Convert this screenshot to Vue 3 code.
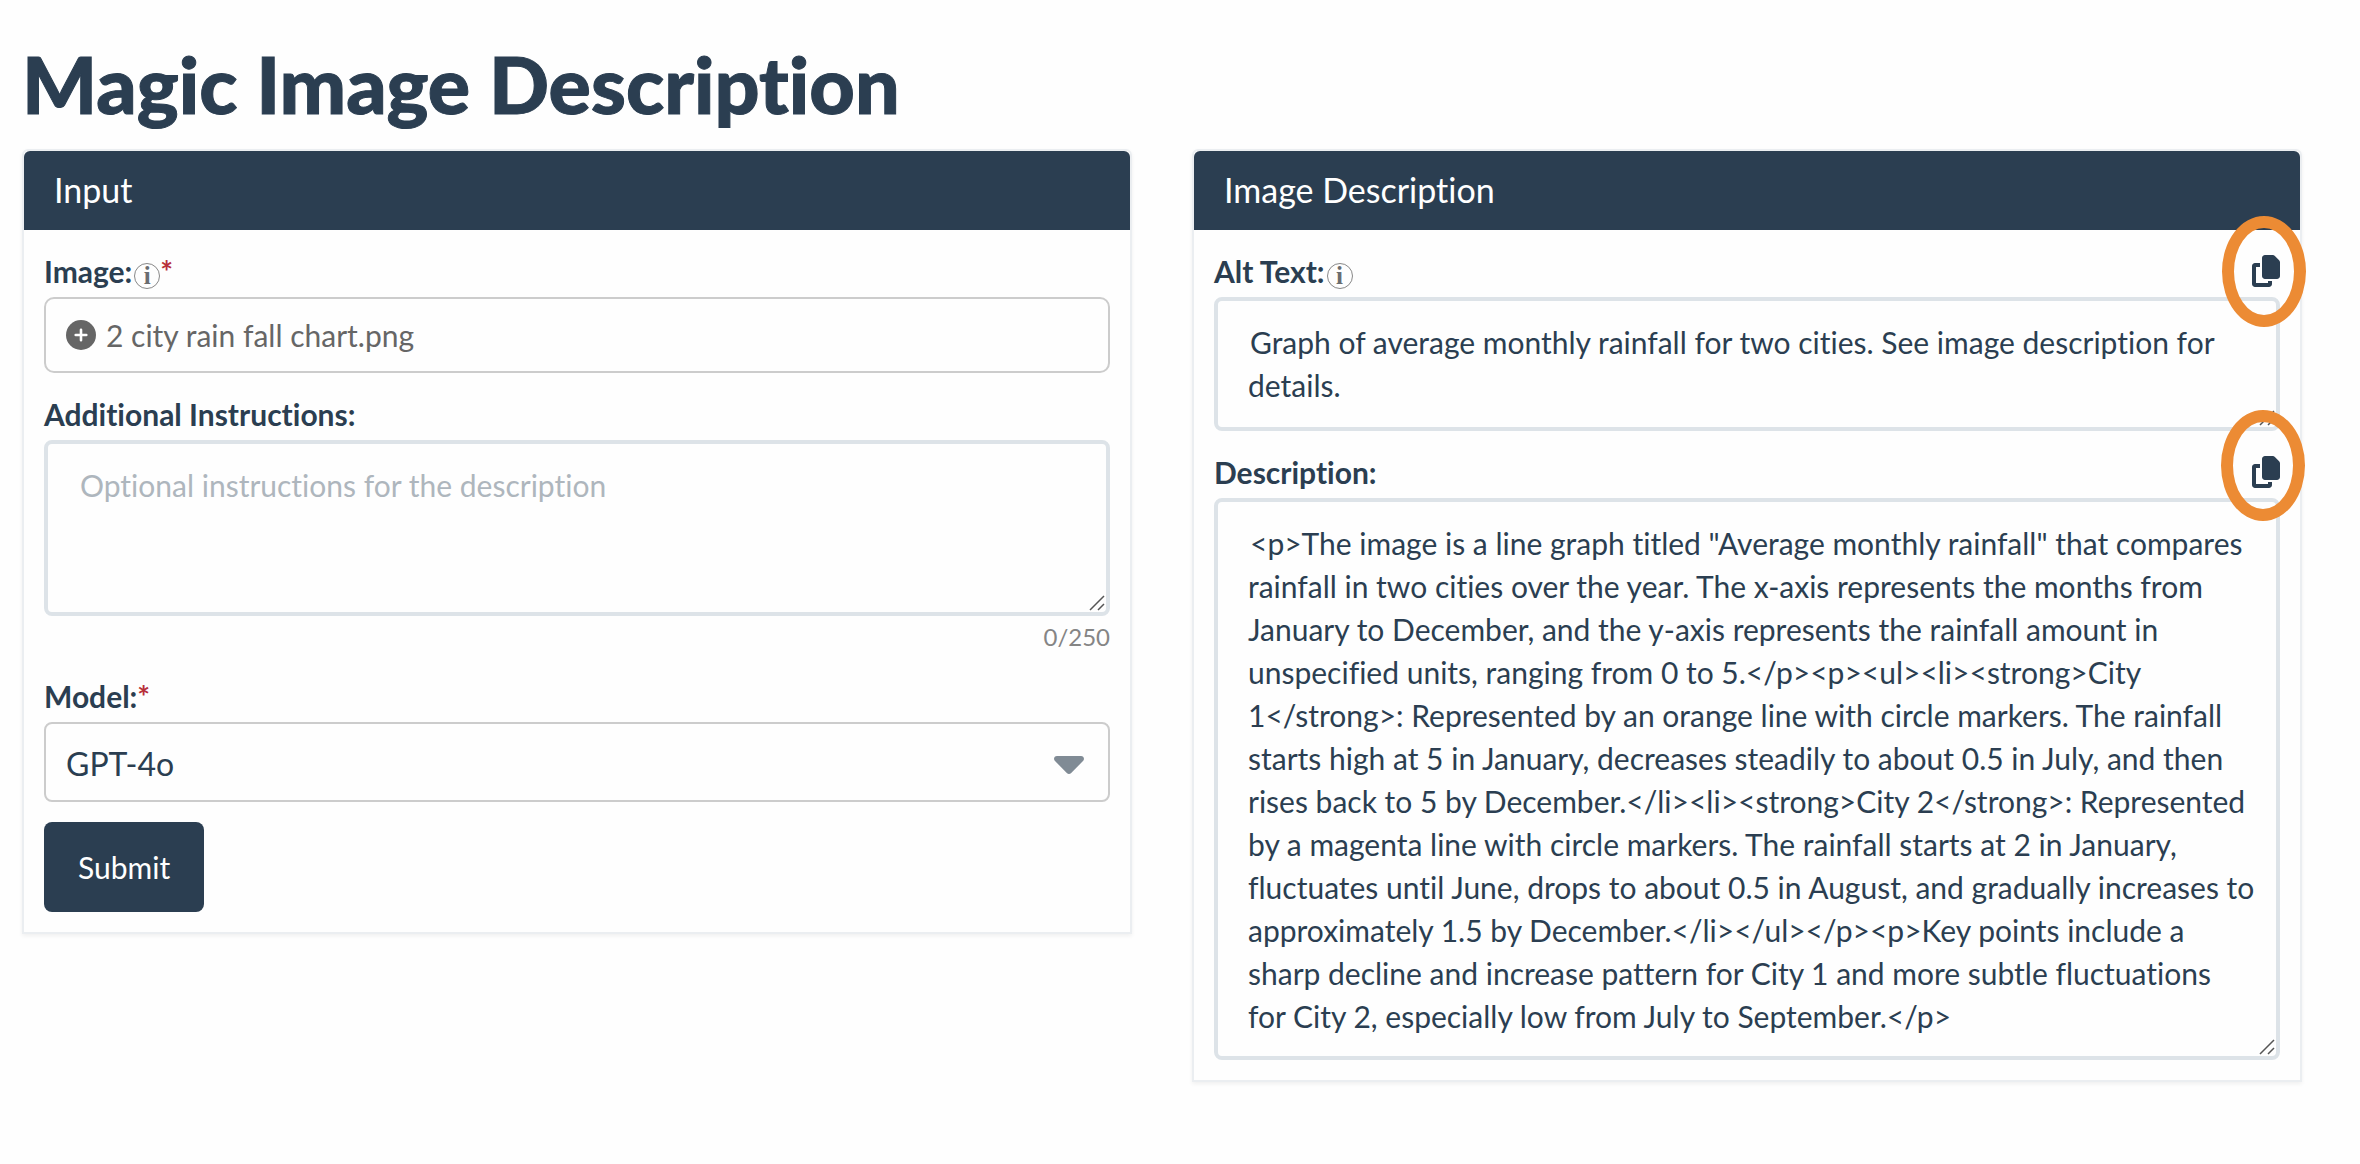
<script setup>
import { ref, computed } from 'vue'

const fileName = ref('2 city rain fall chart.png')
const instructions = ref('')
const model = ref('GPT-4o')
const limit = 250
const used = computed(() => instructions.value.length)

const altText = ref('Graph of average monthly rainfall for two cities. See image description for details.')
const description = ref(
  '<p>The image is a line graph titled "Average monthly rainfall" that compares rainfall in two cities over the year. The x-axis represents the months from January to December, and the y-axis represents the rainfall amount in unspecified units, ranging from 0 to 5.</p><p><ul><li><strong>City 1</strong>: Represented by an orange line with circle markers. The rainfall starts high at 5 in January, decreases steadily to about 0.5 in July, and then rises back to 5 by December.</li><li><strong>City 2</strong>: Represented by a magenta line with circle markers. The rainfall starts at 2 in January, fluctuates until June, drops to about 0.5 in August, and gradually increases to approximately 1.5 by December.</li></ul></p><p>Key points include a sharp decline and increase pattern for City 1 and more subtle fluctuations for\u00a0City 2, especially low from July to September.</p>'
)

function pickFile(event) {
  const file = event.target.files[0]
  if (file) fileName.value = file.name
}

function copy(text) {
  navigator.clipboard?.writeText(text)
}
</script>

<template>
  <main class="page">
    <h1 class="title">Magic Image Description</h1>
    <div class="columns">
      <form class="panel" @submit.prevent>
        <h2 class="panel-head">Input</h2>
        <div class="panel-body">
          <div class="label-row">
            <label for="image">Image:</label>
            <span class="info" title="More information">i</span>
            <span class="required">*</span>
          </div>
          <label class="file" for="image">
            <svg class="plus" viewBox="0 0 30 30" aria-hidden="true">
              <circle cx="15" cy="15" r="15" fill="#666" />
              <path d="M15 9.7v10.6M9.7 15h10.6" stroke="#fff" stroke-width="2.6" stroke-linecap="round" />
            </svg>
            <span>{{ fileName }}</span>
          </label>
          <input id="image" class="file-input" type="file" accept="image/*" @change="pickFile" />

          <div class="label-row">
            <label for="instructions">Additional Instructions:</label>
          </div>
          <div class="area">
            <textarea
              id="instructions"
              v-model="instructions"
              class="instructions"
              rows="3"
              :maxlength="limit"
              placeholder="Optional instructions for the description"
            ></textarea>
            <svg class="grip" viewBox="0 0 16 16" aria-hidden="true">
              <path d="M1 15L15 1M9 15l6-6" />
            </svg>
          </div>
          <div class="counter">{{ used }}/{{ limit }}</div>

          <div class="label-row">
            <label for="model">Model:</label>
            <span class="required">*</span>
          </div>
          <div class="select">
            <select id="model" v-model="model">
              <option>GPT-4o</option>
            </select>
            <svg class="caret" viewBox="0 0 30 18" aria-hidden="true">
              <path d="M3 0h24c2.700 0 4 3 2 5L17.200 17c-1.300 1.300-3.100 1.300-4.400 0L1 5C-1 3 .300 0 3 0z" fill="#808b95" />
            </svg>
          </div>
          <button class="submit" type="submit">Submit</button>
        </div>
      </form>

      <section class="panel">
        <h2 class="panel-head">Image Description</h2>
        <div class="panel-body">
          <div class="label-row">
            <label for="alt">Alt Text:</label>
            <span class="info" title="More information">i</span>
            <button class="copy" type="button" aria-label="Copy alt text" @click="copy(altText)">
              <svg class="copy-icon" viewBox="0 0 448 512" aria-hidden="true">
                <path d="M208 0L332.1 0c12.700 0 24.900 5.100 33.900 14.100l67.900 67.900c9 9 14.100 21.200 14.100 33.900L448 336c0 26.500-21.500 48-48 48l-192 0c-26.500 0-48-21.500-48-48l0-288c0-26.500 21.500-48 48-48zM48 128l80 0 0 64-64 0 0 256 192 0 0-32 64 0 0 48c0 26.500-21.500 48-48 48L48 512c-26.500 0-48-21.500-48-48L0 176c0-26.500 21.500-48 48-48z" />
              </svg>
              <span class="ring"></span>
            </button>
          </div>
          <div class="area">
            <textarea id="alt" v-model="altText" class="alt" rows="2"></textarea>
            <svg class="grip" viewBox="0 0 16 16" aria-hidden="true">
              <path d="M1 15L15 1M9 15l6-6" />
            </svg>
          </div>

          <div class="label-row">
            <label for="description">Description:</label>
            <button class="copy" type="button" aria-label="Copy description" @click="copy(description)">
              <svg class="copy-icon" viewBox="0 0 448 512" aria-hidden="true">
                <path d="M208 0L332.1 0c12.700 0 24.900 5.100 33.900 14.100l67.900 67.900c9 9 14.100 21.200 14.100 33.900L448 336c0 26.500-21.500 48-48 48l-192 0c-26.500 0-48-21.500-48-48l0-288c0-26.500 21.500-48 48-48zM48 128l80 0 0 64-64 0 0 256 192 0 0-32 64 0 0 48c0 26.500-21.500 48-48 48L48 512c-26.500 0-48-21.500-48-48L0 176c0-26.500 21.500-48 48-48z" />
              </svg>
              <span class="ring ring-raised"></span>
            </button>
          </div>
          <div class="area">
            <textarea id="description" v-model="description" rows="12"></textarea>
            <svg class="grip" viewBox="0 0 16 16" aria-hidden="true">
              <path d="M1 15L15 1M9 15l6-6" />
            </svg>
          </div>
        </div>
      </section>
    </div>
  </main>
</template>

<style>
body {
  background: #fefefe;
}
</style>

<style scoped>
.page {
  padding: 36px 58px 40px 22px;
  color: #2b3e51;
  font-family: Lato, "Liberation Sans", sans-serif;
  font-size: 30px;
  font-variant-ligatures: none;
}

.page *,
.page *::before {
  box-sizing: border-box;
}

.title {
  margin: 0 0 17px;
  font-size: 79px;
  line-height: 96px;
  font-weight: 900;
  -webkit-text-stroke: 1px #2b3e51;
}

.columns {
  display: grid;
  grid-template-columns: 1fr 1fr;
  align-items: start;
  gap: 60px;
}

.panel {
  min-width: 0;
  border: 2px solid #ebeef1;
  border-radius: 6px 6px 0 0;
  box-shadow: 0 2px 4px rgba(0, 0, 0, 0.06);
}

.panel-head {
  margin: 0;
  padding: 18px 30px 19px;
  border-radius: 6px 6px 0 0;
  background: #2b3e51;
  color: #fff;
  font-size: 34px;
  line-height: 42px;
  font-weight: 400;
}

.panel-body {
  padding: 20px;
}

.label-row {
  display: flex;
  align-items: center;
  height: 42px;
  margin-bottom: 5px;
  line-height: 44px;
  font-weight: 700;
}

.info {
  width: 26px;
  height: 26px;
  margin: 10px 0 0 2px;
  border: 1px solid #888;
  border-radius: 50%;
  color: #6a6d70;
  font-family: "Liberation Serif", serif;
  font-size: 25px;
  line-height: 24px;
  text-align: center;
}

.required {
  color: #b8303a;
}

.file {
  display: flex;
  align-items: center;
  gap: 10px;
  height: 76px;
  margin-bottom: 20px;
  padding: 0 20px;
  border: 2px solid #ccc;
  border-radius: 10px;
  color: #666;
  cursor: pointer;
}

.plus {
  width: 30px;
  height: 30px;
}

.file-input {
  position: absolute;
  width: 1px;
  height: 1px;
  opacity: 0;
}

.area {
  position: relative;
  margin-bottom: 20px;
}

.area:last-child {
  margin-bottom: 0;
}

textarea {
  display: block;
  width: 100%;
  padding: 20px 20px 18px 30px;
  border: 4px solid #dde3e8;
  border-radius: 8px;
  outline: 0;
  background: transparent;
  color: inherit;
  font: inherit;
  font-variant-ligatures: none;
  line-height: 43px;
  text-indent: 2px;
  resize: none;
  overflow: hidden;
}

textarea::placeholder {
  color: #aeb6bd;
  opacity: 1;
}

.instructions {
  height: 176px;
}

.alt {
  height: 134px;
}

.grip {
  position: absolute;
  right: 5px;
  bottom: 5px;
  width: 16px;
  height: 16px;
  fill: none;
  stroke: #555;
  stroke-width: 1.5;
}

.counter {
  height: 59px;
  margin-top: -20px;
  color: #858585;
  font-size: 24px;
  line-height: 42px;
  text-align: right;
}

.select {
  position: relative;
  margin-bottom: 20px;
}

.select select {
  display: block;
  width: 100%;
  height: 80px;
  padding: 2px 20px 0;
  border: 2px solid #ccc;
  border-radius: 8px;
  appearance: none;
  background: transparent;
  color: inherit;
  font: inherit;
  font-size: 32px;
}

.caret {
  position: absolute;
  top: 34px;
  right: 26px;
  width: 30px;
  height: 18px;
  pointer-events: none;
}

.submit {
  display: block;
  height: 90px;
  padding: 0 34px;
  border: 0;
  border-radius: 8px;
  background: #2b3e51;
  color: #fff;
  font: inherit;
}

.copy {
  position: relative;
  z-index: 1;
  width: 28px;
  height: 32px;
  margin-left: auto;
  padding: 0;
  border: 0;
  background: none;
}

.copy-icon {
  display: block;
  width: 28px;
  height: 32px;
  fill: #2b3e51;
}

.ring {
  position: absolute;
  top: -39px;
  left: -30px;
  width: 84px;
  height: 111px;
  border: 12px solid #ec8b34;
  border-radius: 50%;
  pointer-events: none;
}

.ring-raised {
  top: -46px;
  left: -31px;
}
</style>
